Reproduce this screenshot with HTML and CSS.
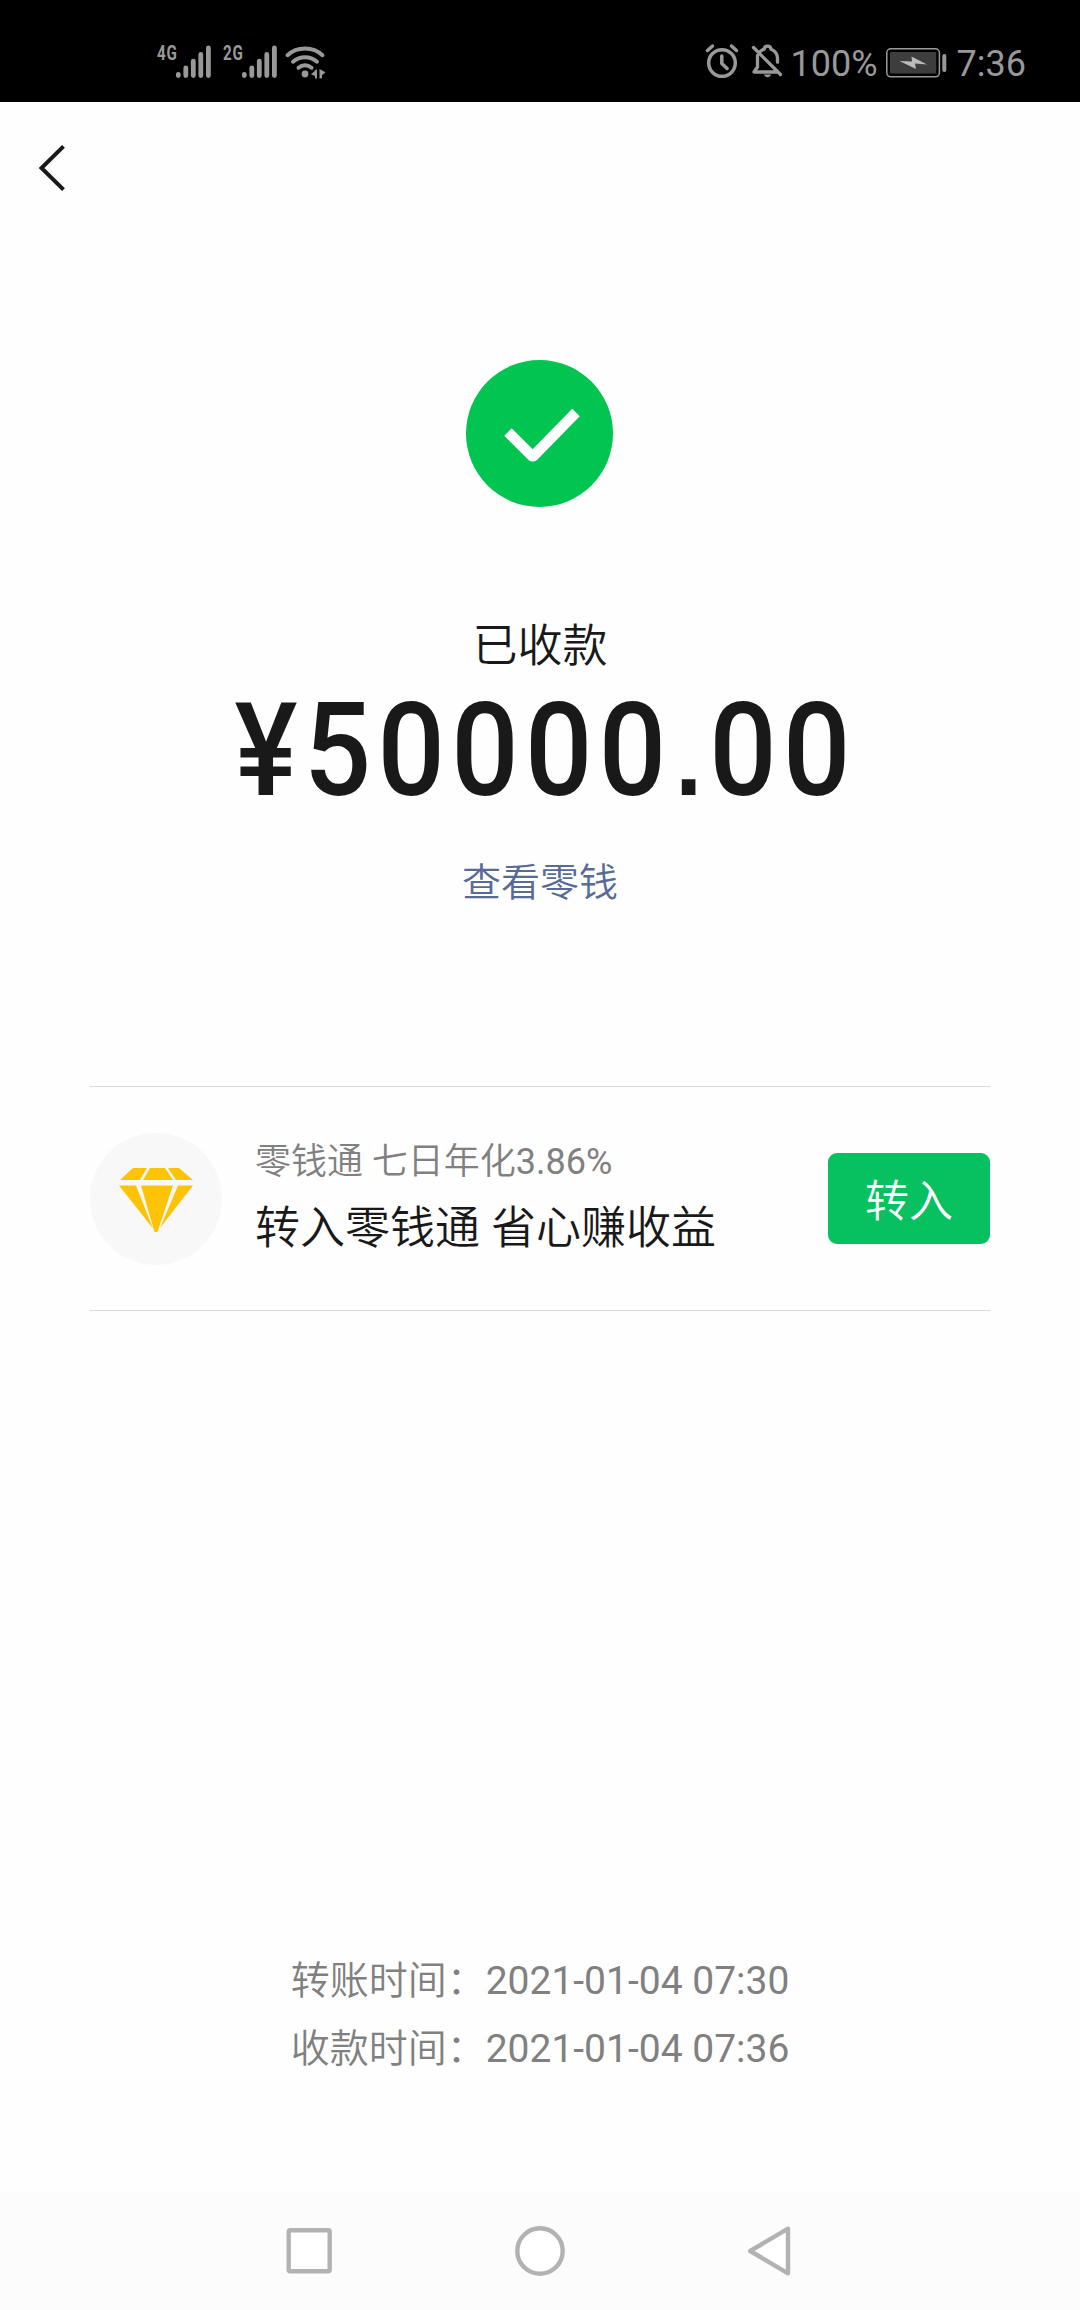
FILE: index.html
```html
<!DOCTYPE html>
<html lang="zh-CN">
<head>
<meta charset="utf-8">
<title>已收款</title>
<link rel="stylesheet" href="styles.css">
</head>
<body>
<div class="screen">
  <header class="status">
    <div class="status-left">
      <span class="net">4G</span>
      <svg class="bars" width="37" height="34" viewBox="0 0 37 34"><path d="M3.3 29.5v1M10.8 23v7.5M18.3 16.2v14.3M25.8 9.5v21M33.4 3v27.5"/></svg>
      <span class="net net-second">2G</span>
      <svg class="bars" width="37" height="34" viewBox="0 0 37 34"><path d="M3.3 29.5v1M10.8 23v7.5M18.3 16.2v14.3M25.8 9.5v21M33.4 3v27.5"/></svg>
      <svg class="wifi" width="42" height="36" viewBox="0 0 42 36">
        <path d="M3.500 11.200C13 2.200 29 2.200 38.500 11.200M9 17.700c7-6 17-6 24 0M14.500 23.700c4-3.200 9-3.200 13 0"/>
        <circle cx="21" cy="30" r="3.400"/>
        <path class="solid" d="M33 25v9.500h-2v-2.500l-4-1.700zM35.500 25l6 3.200-3.500 3v3l-2.500.300z"/>
      </svg>
    </div>
    <div class="status-right">
      <svg class="alarm" width="34" height="36" viewBox="0 0 34 36"><circle cx="17" cy="20" r="13.300"/><path d="M16.800 13v7.500l5.300 5M2.500 7.500l5-4.500M26.500 3l5 4.500"/></svg>
      <svg class="bell" width="32" height="36" viewBox="0 0 32 36"><path d="M2.500 4.500L29.500 31.500M6.500 12.500V24L3 29h23M9.500 8.200c1.200-1 2.400-1.600 3.700-2C13.300 2 19.800 2 20 6.200c4.200 1.700 6.500 5 6.500 9.300v3.700"/><path class="solid" d="M13 31.500h7c-.800 3.500-6.200 3.500-7 0z"/></svg>
      <span class="level">100%</span>
      <svg class="battery" width="62" height="30" viewBox="0 0 62 30"><rect class="shell" x=".800" y=".800" width="52.600" height="28" rx="4"/><rect class="charge" x="4" y="4" width="46.200" height="21.600" rx="1"/><path class="bolt" d="M13.500 13l12.500.500-.500-5L41 16.500l-12-1 1 5.500z"/><path class="nub" d="M58.300 8v14"/></svg>
      <span class="clock">7:36</span>
    </div>
  </header>

  <nav class="topbar">
    <svg class="back" width="30" height="50" viewBox="0 0 30 50"><path d="M25.500 3.300L3.500 25l22 21.700"/></svg>
  </nav>

  <main class="content">
    <section class="result">
      <svg class="tick" width="148" height="148" viewBox="0 0 148 148"><circle cx="73.500" cy="73.500" r="73.500"/><path d="M42 72L66 96Q66.700 96.700 67.500 96L110 52.500"/></svg>
      <div class="state">已收款</div>
      <div class="amount">¥50000<span class="point">.</span>00</div>
      <a class="balance">查看零钱</a>
    </section>

    <section class="offer">
      <div class="badge">
        <svg width="76" height="68" viewBox="0 0 76 68"><path d="M15 1h14l-7 12H2zM32 1h15l8 12H25zM50 1h11l14 12H58zM1 18.500h17l17 43zM23 18.500h32L39.500 65h-3zM60 18.500h15L42 61z"/></svg>
      </div>
      <div class="offer-text">
        <div class="rate">零钱通 七日年化<span class="latin">3.86%</span></div>
        <div class="pitch">转入零钱通 省心赚收益</div>
      </div>
      <div class="button">转入</div>
    </section>

    <section class="times">
      <div>转账时间：<span class="latin">2021-01-04 07:30</span></div>
      <div>收款时间：<span class="latin">2021-01-04 07:36</span></div>
    </section>
  </main>

  <footer class="navbar">
    <svg width="46" height="46" viewBox="0 0 46 46"><rect x="2.700" y="2.200" width="41" height="41" rx="1.500"/></svg>
    <svg width="50" height="50" viewBox="0 0 50 50"><circle cx="25" cy="25" r="22.700"/></svg>
    <svg width="44" height="50" viewBox="0 0 44 50"><path d="M41 2.700v44.600L3.200 25z"/></svg>
  </footer>
</div>
</body>
</html>
```
FILE: styles.css
```css
* { box-sizing: border-box; }

body {
  margin: 0;
  background: #fefefe;
  font-family: Roboto, "Noto Sans CJK SC", sans-serif;
  color: #191919;
}

svg { display: block; flex: none; }

.screen {
  width: 1080px;
  height: 2310px;
  display: flex;
  flex-direction: column;
  overflow: hidden;
}

.status {
  height: 102px;
  padding: 43px 54px 0 157px;
  display: flex;
  justify-content: space-between;
  background: #000;
  color: #999;
}

.status-left, .status-right { display: flex; align-items: flex-start; }
.status svg { fill: none; stroke: #999; stroke-width: 4; stroke-linecap: round; stroke-linejoin: round; }
.status .solid { fill: #999; stroke: none; }

.net {
  width: 18px;
  font: bold 20px/20px Roboto, sans-serif;
  display: flex;
  letter-spacing: 1px;
  transform: scaleX(.76);
  transform-origin: left;
}
.net-second { margin-left: 11px; }
.status .bars { margin-top: 2px; stroke-width: 4.8; }
.status .wifi { margin: 1px 0 0 6px; stroke-width: 4; }
.status .wifi circle { fill: #999; stroke: none; }

.status .alarm { stroke-width: 3.5; }
.status .bell { margin-left: 12px; stroke-width: 3.3; }
.level, .clock { font-size: 36px; line-height: 42px; white-space: nowrap; }
.level { width: 86px; margin-left: 8px; }
.status .battery { margin: 5px 0 0 9px; }
.status .battery .shell { stroke-width: 1.5; }
.status .battery .charge { fill: #3d3d3d; stroke: none; }
.status .battery .bolt { fill: #bbb; stroke: none; }
.status .battery .nub { stroke-width: 4; }
.clock { margin-left: 9px; }

.topbar { height: 132px; padding: 41px 0 0 38px; }
.back { fill: none; stroke: #191919; stroke-width: 4; }

.content { flex: 1; display: flex; flex-direction: column; }

.latin { font-weight: 400; }

.result {
  height: 852px;
  padding-top: 126px;
  display: flex;
  flex-direction: column;
  align-items: center;
}
.tick circle { fill: #02c451; }
.tick path { fill: none; stroke: #fff; stroke-width: 10.500; stroke-linejoin: round; }
.state { margin-top: 109px; font-size: 45px; line-height: 60px; font-weight: 350; }
.amount {
  margin-top: 9px;
  padding-left: 12px;
  font-size: 129px;
  line-height: 130px;
  font-weight: 500;
  letter-spacing: 6.8px;
  white-space: nowrap;
  transform: scaleX(.92);
}
.point { font: bold 105px/1 "Liberation Sans", sans-serif; margin-left: 3px; margin-right: 1px; }
.balance { margin-top: 37px; font-size: 39px; line-height: 60px; font-weight: 350; color: #576b95; }

.offer {
  height: 225px;
  margin: 0 90px;
  border-top: 1px solid #d8d8d8;
  border-bottom: 1px solid #d8d8d8;
  display: flex;
  align-items: center;
}
.badge {
  width: 132px;
  height: 132px;
  border-radius: 50%;
  background: #f8f8f8;
  display: flex;
  align-items: center;
  justify-content: center;
}
.badge svg { margin-top: 5px; }
.badge path { fill: #fec307; }
.offer-text { flex: 1; margin-left: 33px; font-weight: 350; white-space: nowrap; }
.rate { margin-top: -4px; font-size: 36px; line-height: 60px; color: #808080; }
.pitch { margin-top: 4px; font-size: 45px; line-height: 66px; }
.button {
  width: 162px;
  height: 91px;
  padding-top: 4px;
  border-radius: 9px;
  background: #07c160;
  color: #fff;
  font-size: 44px;
  font-weight: 350;
  line-height: 91px;
  text-align: center;
}

.times {
  margin-top: 636px;
  font-size: 39px;
  line-height: 68px;
  font-weight: 350;
  color: #808080;
  text-align: center;
}

.navbar {
  height: 119px;
  padding: 0 289px 0 286px;
  background: #fcfcfc;
  display: flex;
  justify-content: space-between;
  align-items: center;
}
.navbar svg { fill: #fff; stroke: #b2b2b2; stroke-width: 4.400; stroke-linejoin: round; }
```
